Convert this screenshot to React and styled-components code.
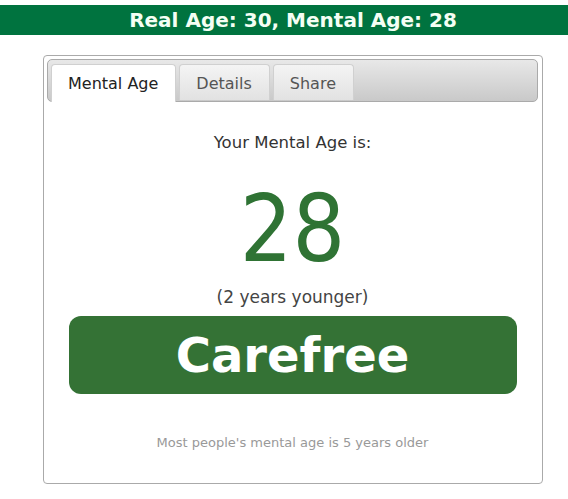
import React from 'react'
import styled, { createGlobalStyle } from 'styled-components'

const GlobalStyle = createGlobalStyle`
  html, body {
    margin: 0;
    padding: 0;
    background: #fff;
    font-family: "DejaVu Sans", Verdana, sans-serif;
  }
`

const Header = styled.div`
  margin-top: 5px;
  height: 30px;
  padding-left: 18px;
  background: #00733f;
  color: #f4fff4;
  font-weight: bold;
  font-size: 20px;
  line-height: 30px;
  text-align: center;
`

const Card = styled.div`
  margin: 20px 0 0 43px;
  width: 491px;
  border: 1px solid #aaa;
  border-radius: 4px;
  padding: 3px 4px 0 3px;
`

const TabBar = styled.div`
  display: flex;
  gap: 3px;
  height: 37px;
  padding: 4px 0 0 3px;
  border: 1px solid #aaa;
  border-radius: 5px;
  background: linear-gradient(#e8e8e8, #c9c9c9);
`

const Tab = styled.div`
  height: ${p => (p.$active ? '38px' : '36px')};
  padding: 0 17px 0 16px;
  box-sizing: border-box;
  border: 1px solid #d0d0d0;
  border-bottom: none;
  border-radius: 4px 4px 0 0;
  background: ${p => (p.$active ? '#fff' : 'linear-gradient(#f4f4f4, #e2e2e2)')};
  color: ${p => (p.$active ? '#222' : '#555')};
  font-size: 16px;
  line-height: 37px;
  position: relative;
  z-index: 1;
`

const Body = styled.div`
  padding: 31px 22px;
  display: flex;
  flex-direction: column;
  align-items: center;
  text-align: center;
`

const Lead = styled.div`
  font-size: 16.5px;
  line-height: 20px;
  color: #333;
`

const Age = styled.div`
  margin-top: 31px;
  font-family: "DejaVu Sans Condensed", "DejaVu Sans", sans-serif;
  font-stretch: condensed;
  font-size: 92px;
  line-height: 92px;
  color: #2f7334;
`

const Diff = styled.div`
  margin-top: 11px;
  font-size: 17px;
  line-height: 20px;
  color: #444;
`

const Verdict = styled.div`
  margin-top: 9px;
  width: 448px;
  height: 78px;
  border-radius: 12px;
  background: #347235;
  color: #fff;
  font-weight: bold;
  font-size: 48px;
  line-height: 78px;
`

const Note = styled.div`
  margin-top: 40px;
  font-size: 13px;
  line-height: 18px;
  color: #999;
`

export default function App() {
  return (
    <>
      <GlobalStyle />
      <Header>Real Age: 30, Mental Age: 28</Header>
      <Card>
        <TabBar>
          <Tab $active>Mental Age</Tab>
          <Tab>Details</Tab>
          <Tab>Share</Tab>
        </TabBar>
        <Body>
          <Lead>Your Mental Age is:</Lead>
          <Age>28</Age>
          <Diff>(2 years younger)</Diff>
          <Verdict>Carefree</Verdict>
          <Note>Most people's mental age is 5 years older</Note>
        </Body>
      </Card>
    </>
  )
}
